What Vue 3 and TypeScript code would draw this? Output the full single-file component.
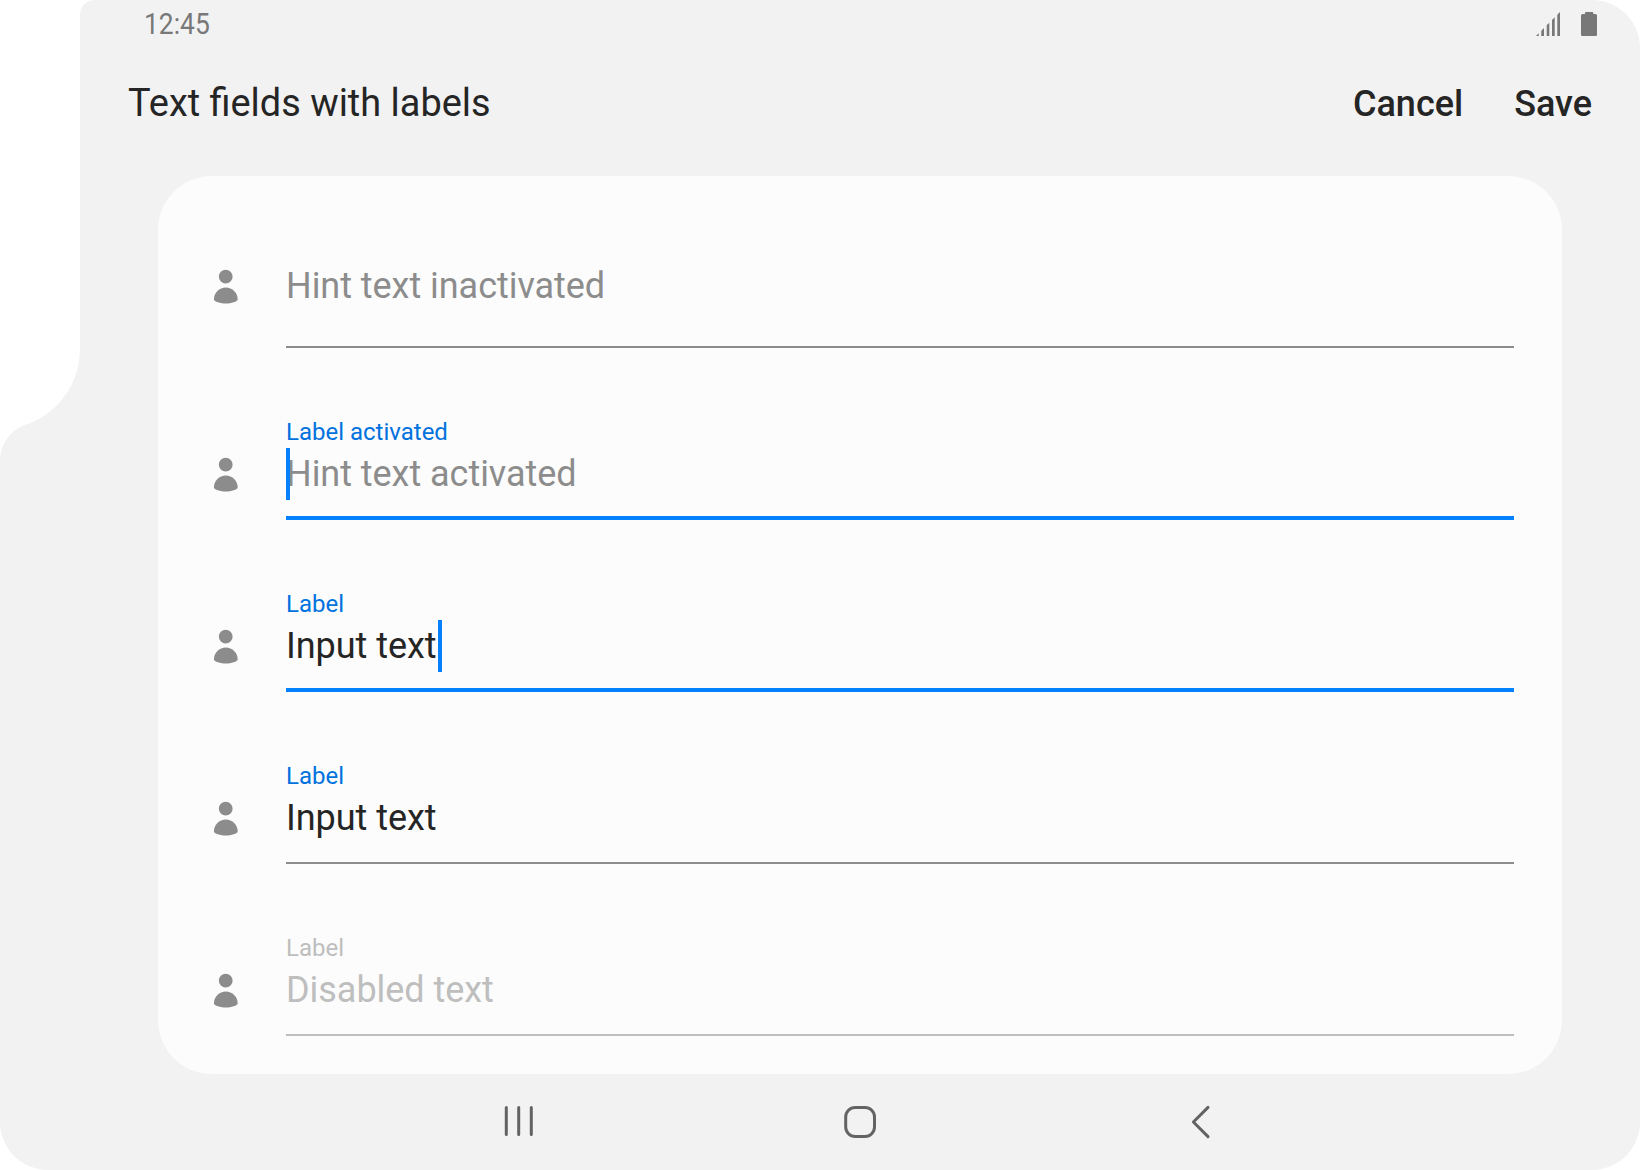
<script setup lang="ts">
interface Field {
  label?: string
  text: string
  tone: 'hint' | 'filled' | 'disabled'
  active?: boolean
  caret?: 'start' | 'end'
}

const fields: Field[] = [
  { text: 'Hint text inactivated', tone: 'hint' },
  { label: 'Label activated', text: 'Hint text activated', tone: 'hint', active: true, caret: 'start' },
  { label: 'Label', text: 'Input text', tone: 'filled', active: true, caret: 'end' },
  { label: 'Label', text: 'Input text', tone: 'filled' },
  { label: 'Label', text: 'Disabled text', tone: 'disabled' },
]
</script>

<template>
  <div class="device">
    <header class="status">
      <span class="clock">12:45</span>
      <div class="status-icons">
        <svg class="signal" width="24" height="24" viewBox="0 0 24 24">
          <path d="M0 24L2.7 21.3V24ZM5.3 24V18.7L8 16V24ZM10.7 24V13.3L13.3 10.7V24ZM16 24V8L18.7 5.3V24ZM21.3 24V2.7L24 0V24Z" />
        </svg>
        <svg width="16" height="24" viewBox="0 0 16 24">
          <path d="M4 2V1a1 1 0 0 1 1-1h6.300a1 1 0 0 1 1 1V2H14.500A1.500 1.500 0 0 1 16 3.500V22.800A1.200 1.200 0 0 1 14.800 24H1.200A1.200 1.200 0 0 1 0 22.800V3.500A1.500 1.500 0 0 1 1.500 2Z" />
        </svg>
      </div>
    </header>

    <div class="appbar">
      <h1 class="title">Text fields with labels</h1>
      <button class="action cancel" type="button">Cancel</button>
      <button class="action save" type="button">Save</button>
    </div>

    <main class="card">
      <div v-for="(field, i) in fields" :key="i" class="row" :class="{ plain: !field.label }">
        <svg class="person" width="48" height="52" viewBox="0 0 48 52">
          <circle cx="23.700" cy="16.700" r="6.900" />
          <path d="M11.900 39.600C11.900 32.600 17.300 27.600 23.800 27.600S35.700 32.600 35.700 39.600C35.700 41.700 29 43.600 23.800 43.600S11.900 41.700 11.900 39.600Z" />
        </svg>
        <div class="field" :class="[field.tone, { active: field.active }]">
          <span v-if="field.label" class="label">{{ field.label }}</span>
          <div class="value">
            <span class="text">{{ field.text }}</span>
            <i v-if="field.caret" class="caret" :class="field.caret"></i>
          </div>
        </div>
      </div>
    </main>

    <nav class="nav">
      <svg width="40" height="40" viewBox="0 0 40 40">
        <path d="M7.300 5.500V32.500M19.700 5.500V32.500M32.300 5.500V32.500" />
      </svg>
      <svg width="40" height="40" viewBox="0 0 40 40">
        <rect x="5.700" y="5.500" width="28.800" height="29" rx="9.500" />
      </svg>
      <svg width="40" height="40" viewBox="0 0 40 40">
        <path d="M27 5.400L12.400 20L27 34.600" />
      </svg>
    </nav>
  </div>
</template>

<style>
body {
  background: #fff;
}
</style>

<style scoped>
.device {
  display: flex;
  flex-direction: column;
  box-sizing: border-box;
  width: 1640px;
  height: 1170px;
  background: #f2f2f2;
  clip-path: path('M80 16C80 6 86 0 96 0H1592A48 48 0 0 1 1640 48V1122A48 48 0 0 1 1592 1170H48A48 48 0 0 1 0 1122V458A38 38 0 0 1 28 424A80 80 0 0 0 80 348Z');
  font-family: Roboto, sans-serif;
  color: #252525;
}

.status {
  display: flex;
  justify-content: space-between;
  height: 48px;
  padding: 0 43px 0 144px;
  color: #787878;
}

.clock {
  margin-top: 6px;
  font-size: 30px;
  line-height: 35px;
  transform: scaleX(0.88);
  transform-origin: left;
}

.status-icons {
  display: flex;
  gap: 21px;
  margin-top: 12px;
  fill: #787878;
}

.appbar {
  display: flex;
  height: 128px;
  padding: 33px 48px 0 128px;
  box-sizing: border-box;
}

.title {
  flex: 1;
  margin: 0;
  font-size: 37.92px;
  line-height: 44px;
  font-weight: 400;
}

.action {
  height: 44px;
  margin-top: 1px;
  padding: 0;
  border: 0;
  background: none;
  color: inherit;
  font: 500 36px/44px Roboto, sans-serif;
}

.save {
  margin-left: 51px;
}

.card {
  width: 1404px;
  height: 898px;
  margin-left: 158px;
  box-sizing: border-box;
  padding: 0 48px 38px 44px;
  border-radius: 54px;
  background: #fcfcfc;
}

.row {
  display: flex;
  align-items: flex-end;
  gap: 36px;
  height: 172px;
}

.person {
  flex: none;
  margin-bottom: 20px;
  fill: #8c8c8c;
}

.plain .person {
  margin-bottom: 36px;
}

.field {
  display: flex;
  flex: 1;
  flex-direction: column;
  padding-bottom: 18px;
  border-bottom: 2px solid #8c8c8c;
}

.plain .field {
  padding-bottom: 34px;
}

.field.active {
  padding-bottom: 16px;
  border-bottom: 4px solid #0381fe;
}

.label {
  margin-bottom: 2px;
  font-size: 24px;
  line-height: 28px;
  color: #0072de;
}

.value {
  position: relative;
  align-self: flex-start;
  height: 52px;
  font-size: 36px;
  line-height: 52px;
  letter-spacing: -0.04px;
  white-space: nowrap;
}

.text {
  display: block;
}

.hint .value {
  color: #8c8c8c;
}

.disabled {
  border-color: #bebebe;
}

.disabled .label,
.disabled .value {
  color: #bebebe;
}

.caret {
  position: absolute;
  top: 0;
  width: 4px;
  height: 52px;
  background: #0381fe;
}

.caret.start {
  left: 0;
}

.caret.end {
  right: -5px;
}

.nav {
  display: flex;
  align-items: center;
  gap: 301px;
  height: 96px;
  padding-left: 499px;
}

.nav svg {
  fill: none;
  stroke: #636363;
  stroke-width: 3;
  stroke-linecap: round;
  stroke-linejoin: round;
}
</style>
